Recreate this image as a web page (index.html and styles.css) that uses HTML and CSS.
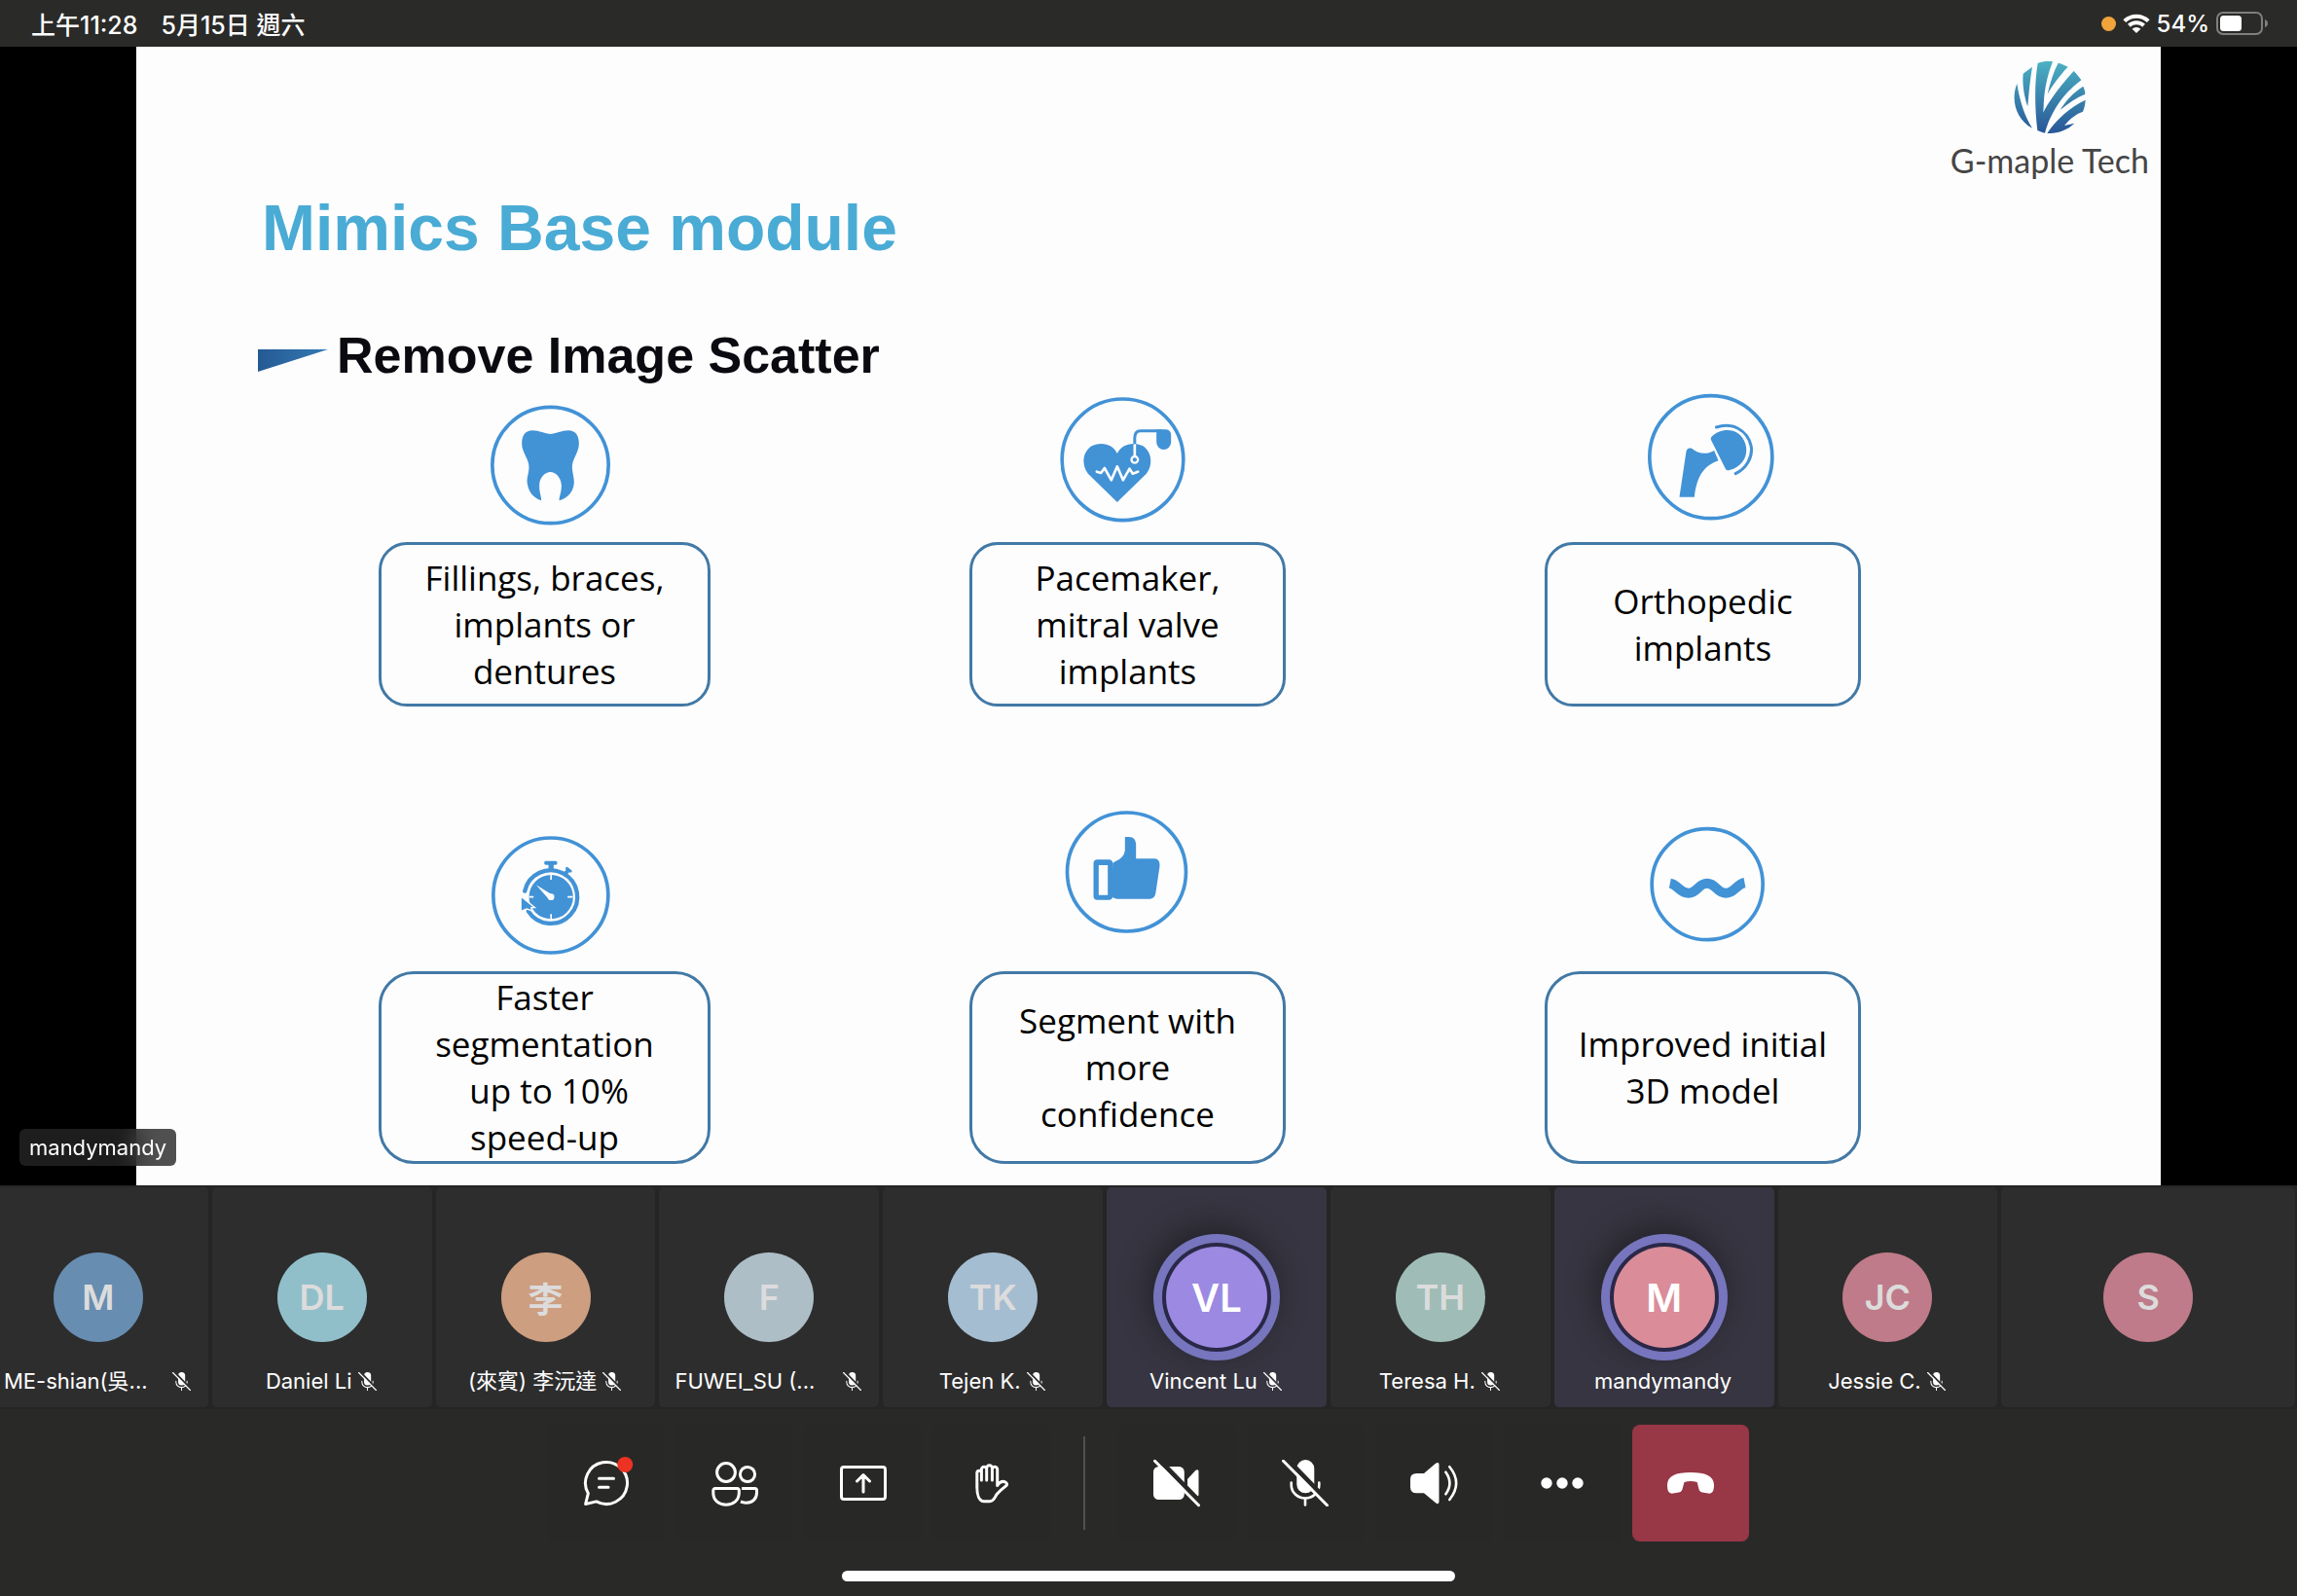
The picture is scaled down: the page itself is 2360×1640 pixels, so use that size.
FILE: index.html
```html
<!DOCTYPE html>
<html lang="zh-Hant">
<head>
<meta charset="utf-8">
<meta name="viewport" content="width=device-width, initial-scale=1">
<title>Meeting</title>
<link rel="stylesheet" href="styles.css">
</head>
<body>
<svg class="sprite" width="0" height="0" aria-hidden="true">
  <defs>
    <mask id="slash-gap" maskUnits="userSpaceOnUse" x="-4" y="-4" width="60" height="60">
      <rect x="-4" y="-4" width="60" height="60" fill="#fff"/>
      <path d="M3 -3L51 46.500" stroke="#000" stroke-width="5"/>
    </mask>
    <symbol id="mic-off" viewBox="0 0 48 48">
      <g mask="url(#slash-gap)">
        <rect x="15.300" y="0" width="18" height="34.300" rx="9" fill="currentColor"/>
        <path d="M9.700 23.500v2.500a14.300 13.500 0 0 0 28.600 0v-2.500M24 40v6.500" fill="none" stroke="currentColor" stroke-width="2.600" stroke-linecap="round"/>
      </g>
      <path d="M1.500 1.300L46.500 46.700" stroke="currentColor" stroke-width="3" stroke-linecap="round"/>
    </symbol>
  </defs>
</svg>

<header class="status">
  <div class="status-group status-time"><span>上午11:28</span><span>5月15日 週六</span></div>
  <div class="status-group">
    <span class="rec-dot"></span>
    <svg class="wifi" viewBox="0 0 28 20" aria-hidden="true">
      <path d="M1.800 7.600A17.500 17.500 0 0 1 26.200 7.600M6.400 12.200A11 11 0 0 1 21.600 12.200" fill="none" stroke="#fff" stroke-width="4"/>
      <path d="M14 20L9.600 15.800A6.300 6.300 0 0 1 18.400 15.800Z" fill="#fff"/>
    </svg>
    <span>54%</span>
    <svg class="battery" viewBox="0 0 53 24" aria-hidden="true">
      <rect x="1" y="1" width="46" height="22" rx="6" fill="none" stroke="#7f7f7e" stroke-width="2"/>
      <rect x="4" y="4" width="22" height="16" rx="3.500" fill="#fff"/>
      <path d="M50 8Q53 9 53 12T50 16Z" fill="#7f7f7e"/>
    </svg>
  </div>
</header>

<main class="stage">
  <article class="slide">
    <div class="brand">
      <svg class="brand-mark" viewBox="506 189 222 222" aria-hidden="true">
        <defs><linearGradient id="leaf" gradientUnits="userSpaceOnUse" x1="0" y1="189" x2="0" y2="411"><stop offset="0" stop-color="#4bb1c3"/><stop offset="1" stop-color="#285697"/></linearGradient></defs>
        <g fill="url(#leaf)">
          <path d="M516 258C524 310 540 360 563 395C515 370 495 310 516 258Z"/>
          <path d="M535 227L563 206C557 240 552 290 549 328C537 295 532 255 535 227Z"/>
          <path d="M580 195C595 189 610 188 626 190C612 225 604 260 600 295C598 320 598 335 597 347C610 320 640 275 691 219C700 228 708 238 714 247C670 280 625 330 602 410C595 409 585 405 579 402C570 330 570 250 580 195Z"/>
          <path d="M643 194C655 197 665 202 673 206C650 230 625 262 610 290C618 255 628 222 643 194Z"/>
          <path d="M720 266C724 275 726 282 726 290C700 300 675 318 649 339C665 312 690 285 720 266Z"/>
          <path d="M727 308C726 325 722 336 719 344C700 350 680 365 662 387L693 380C670 402 640 412 609 411C635 370 680 330 727 308Z"/>
        </g>
      </svg>
      <span class="brand-name">G-maple Tech</span>
    </div>
    <h1 class="title">Mimics Base module</h1>
    <h2 class="subtitle">
      <svg class="wedge" viewBox="0 0 72 24" aria-hidden="true"><defs><linearGradient id="wedge-fill"><stop offset="0" stop-color="#255a93"/><stop offset="1" stop-color="#3479b4"/></linearGradient></defs><path d="M0 0H72L0 23Z" fill="url(#wedge-fill)"/></svg>
      Remove Image Scatter
    </h2>

    <ul class="features">
      <li class="feature">
        <svg class="feature-icon" viewBox="319.500 3 498 498" aria-hidden="true">
          <circle class="ring" cx="585" cy="264" r="179"/>
          <path d="M585 168C600 168 620 157 640 157C662 157 673 172 673 198C673 225 652 245 652 270C652 285 658 300 658 318C656 345 640 365 612 373C612 360 620 345 619 325C617 300 600 285 585 285C570 285 552 300 551 325C550 345 557 360 557 373C532 365 515 345 513 312C513 300 519 285 519 270C519 245 497 225 497 198C497 172 508 157 530 157C550 157 570 168 585 168Z"/>
        </svg>
        <p class="card">Fillings, braces,<br>implants or<br>dentures</p>
      </li>
      <li class="feature">
        <svg class="feature-icon" viewBox="286.500 3 498 498" aria-hidden="true">
          <circle class="ring" cx="519" cy="247" r="187"/>
          <path d="M502 378L412 290C390 262 396 220 425 204C455 190 490 200 502 228C515 200 550 190 580 204C608 220 614 262 592 290Z"/>
          <path d="M556 200V180Q556 158 574 158H640" fill="none" stroke="#4292d6" stroke-width="9"/>
          <path d="M623 154H652Q668 155 668 172V193A22.500 23 0 0 1 623 193Z"/>
          <path d="M439 284L452 288L463 273L484 310L502 268L520 310L540 275L550 290L566 284" fill="none" stroke="#fdfdfd" stroke-width="8" stroke-linejoin="round" stroke-linecap="round"/>
          <path d="M556 199V237" stroke="#fdfdfd" stroke-width="8"/>
          <circle cx="556" cy="247" r="10" stroke="#fdfdfd" stroke-width="7"/>
        </svg>
        <p class="card">Pacemaker,<br>mitral valve<br>implants</p>
      </li>
      <li class="feature">
        <svg class="feature-icon" viewBox="289.500 3 498 498" aria-hidden="true">
          <circle class="ring" cx="562" cy="239" r="189"/>
          <path d="M485 228C486 213 494 209 504 213C520 226 545 235 572 219L585 250C545 265 520 290 511 362H465Z"/>
          <path d="M563 178C590 150 635 148 658 178C685 215 670 265 620 279C613 281 610 279 607 275L562 185Q561 181 563 178Z"/>
          <path d="M579 147C625 130 675 155 686 205C692 240 670 275 638 290" fill="none" stroke="#4292d6" stroke-width="9" stroke-linecap="round"/>
        </svg>
        <p class="card">Orthopedic<br>implants</p>
      </li>
      <li class="feature">
        <svg class="feature-icon" viewBox="319.500 36 498 498" aria-hidden="true">
          <circle class="ring" cx="586" cy="300" r="177"/>
          <path d="M506 287A82 82 0 1 1 517 349" fill="none" stroke="#4292d6" stroke-width="13" stroke-linecap="round"/>
          <rect x="566" y="194" width="40" height="12" rx="5"/><path d="M579 202H595V222H579Z"/>
          <path d="M631 215L637 212L652 224L649 230L643 229L635 238L625 230L633 222Z"/>
          <circle cx="587" cy="305" r="68"/>
          <path d="M587 236V252M587 358V374M519 305H533M638 305H654" stroke="#fdfdfd" stroke-width="5"/>
          <path d="M541 268L592 299L580 312Z" fill="#fdfdfd"/><circle cx="587" cy="305" r="10" fill="#fdfdfd"/>
          <path d="M494 303L537 338L526 338L530 348L512 342L494 349Z" stroke="#fdfdfd" stroke-width="4"/>
        </svg>
        <p class="card card-tall">Faster<br>segmentation<br>&nbsp;up to 10%<br>speed-up</p>
      </li>
      <li class="feature">
        <svg class="feature-icon" viewBox="286.500 36 498 498" aria-hidden="true">
          <circle class="ring" cx="531" cy="228" r="183"/>
          <path fill-rule="evenodd" d="M441 190H476Q488 190 488 202V302Q488 314 476 314H441Q429 314 429 302V202Q429 190 441 190ZM445 207V299H473V207Z"/>
          <path d="M488 200C510 190 525 180 526 160V120H538C553 120 560 130 560 145V187H615C628 187 634 195 633 210L621 290C619 305 612 311 600 311H505C495 311 490 308 486 304Z"/>
        </svg>
        <p class="card card-tall">Segment with<br>more<br>confidence</p>
      </li>
      <li class="feature">
        <svg class="feature-icon" viewBox="289.500 36 498 498" aria-hidden="true">
          <circle class="ring" cx="551" cy="266" r="171"/>
          <path d="M436 263C462 268 465 293 493 293S522 263 550 263S580 293 608 293S640 266 666 261" fill="none" stroke="#4292d6" stroke-width="30"/>
        </svg>
        <p class="card card-tall">Improved initial<br>3D model</p>
      </li>
    </ul>
  </article>
  <span class="presenter">mandymandy</span>
</main>

<ul class="people">
  <li class="person person-first"><span class="avatar blue">M</span><span class="name"><span class="name-text name-fill">ME-shian(吳...</span><svg class="mic"><use href="#mic-off"/></svg></span></li>
  <li class="person"><span class="avatar teal">DL</span><span class="name"><span class="name-text">Daniel Li</span><svg class="mic"><use href="#mic-off"/></svg></span></li>
  <li class="person"><span class="avatar orange">李</span><span class="name"><span class="name-text">(來賓) 李沅達</span><svg class="mic"><use href="#mic-off"/></svg></span></li>
  <li class="person"><span class="avatar grey">F</span><span class="name"><span class="name-text name-fill">FUWEI_SU (...</span><svg class="mic"><use href="#mic-off"/></svg></span></li>
  <li class="person"><span class="avatar sky">TK</span><span class="name"><span class="name-text">Tejen K.</span><svg class="mic"><use href="#mic-off"/></svg></span></li>
  <li class="person speaking"><span class="avatar violet">VL</span><span class="name"><span class="name-text">Vincent Lu</span><svg class="mic"><use href="#mic-off"/></svg></span></li>
  <li class="person"><span class="avatar green">TH</span><span class="name"><span class="name-text">Teresa H.</span><svg class="mic"><use href="#mic-off"/></svg></span></li>
  <li class="person speaking"><span class="avatar pink">M</span><span class="name"><span class="name-text">mandymandy</span></span></li>
  <li class="person"><span class="avatar rose">JC</span><span class="name"><span class="name-text">Jessie C.</span><svg class="mic"><use href="#mic-off"/></svg></span></li>
  <li class="person person-self"><span class="avatar rose">S</span></li>
</ul>

<footer class="controls">
  <div class="buttons">
    <button class="control" type="button" aria-label="Chat"><svg class="glyph" viewBox="0 0 48 48"><path d="M13.800 42.900L2.600 45.500L5.300 34.600A21.500 21.500 0 1 1 13.800 42.900ZM16.500 19.300H31.500M16.500 28.300H26"/><circle cx="43.200" cy="5" r="8" fill="#ec3223" stroke="none"/></svg></button>
    <button class="control" type="button" aria-label="People"><svg class="glyph" viewBox="0 0 48 48"><circle cx="15" cy="13" r="9.400"/><circle cx="37" cy="15" r="7.600"/><path d="M3.800 29.500H26.300A2 2 0 0 1 28.300 31.500V34C28.300 42 22 46.200 15 46.200S1.800 42 1.800 34V31.500A2 2 0 0 1 3.800 29.500Z"/><path stroke-linecap="butt" d="M31 29.500H44.500A2 2 0 0 1 46.500 31.500V34C46.500 40 42 44.200 36 44.200C34 44.200 32 43.800 30 43"/></svg></button>
    <button class="control" type="button" aria-label="Share"><svg class="glyph" viewBox="0 0 48 48"><rect x="1.500" y="7.500" width="45" height="33" rx="2.500"/><path d="M24 33V16M17.500 22L24 15.500L30.500 22"/></svg></button>
    <button class="control" type="button" aria-label="Raise hand"><svg class="glyph" viewBox="0 0 48 48"><path d="M29.700 26.500V10A2.650 2.650 0 0 0 24.400 10V21M24.400 10V8.500A2.850 2.850 0 0 0 18.700 8.500V21M18.700 10A2.650 2.650 0 0 0 13.400 10V21M13.400 13.500A2.300 2.300 0 0 0 8.800 13.500V28C8.800 36 11 42.700 16 42.700H22C26 42.700 27 38.700 29 35.700S34 30.500 39 26.500C40 25.500 39.600 24 38 23C35 21.500 32 23 29.700 26.500"/></svg></button>
    <span class="divider"></span>
    <button class="control" type="button" aria-label="Camera"><svg class="glyph solid" viewBox="0 0 48 48"><g mask="url(#slash-gap)"><rect x="0" y="7" width="31.800" height="34" rx="5.500"/><path d="M35 20L43.500 10.800Q46.500 9 46.500 12V35.500Q46.500 39 43.500 36.500L35 28.500Z"/></g><path d="M1.500 1.300L46.500 46.700" stroke="#fff" stroke-width="3" stroke-linecap="round"/></svg></button>
    <button class="control" type="button" aria-label="Microphone"><svg class="glyph-use"><use href="#mic-off"/></svg></button>
    <button class="control" type="button" aria-label="Speaker"><svg class="glyph" viewBox="0 0 48 48"><path fill="#fff" stroke="none" d="M6.500 14H14L26 3.800Q29.500 1.500 29.500 5V43Q29.500 46.500 26 44.300L14 34.300H6.500Q0 34.300 0 28V20Q0 14 6.500 14Z"/><path stroke-width="2.600" d="M36.400 12.700Q44.500 24 36.400 35.300M40.300 7.200Q54 24 40.300 41"/></svg></button>
    <button class="control" type="button" aria-label="More"><svg class="glyph solid" viewBox="0 0 48 48"><circle cx="8" cy="24" r="5.700"/><circle cx="24" cy="24" r="5.700"/><circle cx="40" cy="24" r="5.700"/></svg></button>
    <button class="control hangup" type="button" aria-label="Leave"><svg class="glyph solid" viewBox="0 0 48 48"><path d="M24 13C39 13 48 16.500 48 26C48 31 47 34 43.500 34.700L36 33.500C33.500 33 32.700 31.500 32.200 29L30.700 23Q24 21.200 17.500 23L15.800 29C15.300 31.500 14.500 33 12 33.500L4.500 34.700C1 34 0 31 0 26C0 16.500 9 13 24 13Z"/></svg></button>
  </div>
  <span class="home-bar"></span>
</footer>
</body>
</html>
```
FILE: styles.css
```css
* { box-sizing: border-box; }

body {
  margin: 0;
  min-height: 100vh;
  display: flex;
  flex-direction: column;
  background: #292928;
  color: #fff;
  font-family: Inter, "Noto Sans CJK TC", sans-serif;
}

ul { list-style: none; margin: 0; padding: 0; }
.sprite { position: absolute; }

/* Status bar */
.status {
  height: 48px;
  padding: 0 30px 0 32px;
  display: flex;
  align-items: center;
  justify-content: space-between;
  background: #2a2a28;
  font-size: 24px;
  font-weight: 500;
}
.status-group { display: flex; align-items: center; gap: 7px; }
.status-time { gap: 24px; font-size: 25px; }
.rec-dot { width: 15px; height: 15px; border-radius: 50%; background: #f1a33c; }
.wifi { width: 28px; height: 20px; }
.battery { width: 53px; height: 24px; }

/* Shared slide */
.stage {
  position: relative;
  flex: 1;
  display: flex;
  padding: 0 140px;
  background: #000;
}
.slide {
  flex: 1;
  padding: 15px 0 22px;
  background: #fdfdfd;
  color: #000;
}
.brand {
  display: flex;
  flex-direction: column;
  align-items: center;
  width: fit-content;
  margin-left: auto;
  padding-right: 12px;
  gap: 8px;
}
.brand-mark { width: 74px; height: 74px; }
.brand-name {
  font-family: Lato, sans-serif;
  font-size: 34px;
  line-height: 40px;
  color: #454545;
}
.title, .subtitle {
  margin: 0;
  font-family: "Liberation Sans", Arial, sans-serif;
  font-weight: 700;
}
.title {
  margin-top: 11px;
  padding-left: 129px;
  font-size: 66px;
  line-height: 76px;
  color: #4aabd5;
}
.subtitle {
  display: flex;
  align-items: baseline;
  gap: 9px;
  margin-top: 67px;
  padding-left: 125px;
  font-size: 52px;
  line-height: 52px;
  color: #0b0a10;
}
.wedge { width: 72px; height: 24px; }

.features {
  display: grid;
  grid-template-columns: 341fr 325fr 325fr;
  column-gap: 266px;
  row-gap: 106px;
  padding: 0 308px 0 249px;
}
.feature { display: flex; flex-direction: column; align-items: center; }
.feature-icon { width: 166px; height: 166px; overflow: visible; fill: #4292d6; }
.ring { fill: none; stroke: #4292d6; stroke-width: 11px; }
.card {
  width: 100%;
  min-height: 169px;
  margin: 0;
  display: grid;
  place-content: center;
  border: 3px solid #4279a6;
  border-radius: 29px;
  font-family: "Open Sans", "Noto Sans", sans-serif;
  font-size: 35px;
  line-height: 48px;
  text-align: center;
}
.card-tall { min-height: 198px; border-radius: 36px; }

.presenter {
  position: absolute;
  left: 20px;
  bottom: 20px;
  padding: 0 10px;
  border-radius: 6px;
  background: rgba(36, 36, 36, 0.8);
  backdrop-filter: blur(12px);
  font-size: 22px;
  line-height: 38px;
}

/* Participants */
.people {
  display: flex;
  gap: 4px;
  height: 230px;
  padding: 2px 2px 2px 0;
  background: #252525;
  overflow: hidden;
}
.person {
  position: relative;
  flex: 226 1 0;
  min-width: 0;
  display: grid;
  place-items: center;
  border-radius: 5px;
  background: #2d2d2d;
}
.person-first { margin-left: -12px; }
.person-self { flex-grow: 302; }
.avatar {
  width: 92px;
  height: 92px;
  border-radius: 50%;
  display: grid;
  place-items: center;
  color: #dcdcdc;
  font-size: 36px;
  font-weight: 600;
}
.name {
  position: absolute;
  left: 16px;
  right: 18px;
  bottom: 12px;
  display: flex;
  align-items: center;
  justify-content: center;
  gap: 6px;
  font-size: 22px;
  line-height: 30px;
}
.name-text { white-space: nowrap; }
.name-fill { flex: 1; }
.mic { width: 19px; height: 19px; }

.speaking { background: #363541; }
.speaking .avatar {
  width: 104px;
  height: 104px;
  color: #fff;
  font-size: 40px;
  box-shadow: 0 0 0 4px #2a2847, 0 0 0 13px #7675bd, -4px -8px 28px 14px rgba(20, 20, 22, 0.5);
}

.blue { background: #678db1; }
.teal { background: #90bfca; }
.orange { background: #cd9e80; }
.grey { background: #adbec6; }
.sky { background: #a5bdd1; }
.violet { background: #9b89e2; }
.green { background: #9fbdb6; }
.pink { background: #da8c99; }
.rose { background: #bf7b89; }

/* Call controls */
.controls {
  display: flex;
  flex-direction: column;
  align-items: center;
  justify-content: space-between;
  height: 192px;
  padding: 16px 0 15px;
}
.buttons { display: flex; align-items: center; gap: 12px; }
.control {
  width: 120px;
  height: 120px;
  padding: 0;
  display: grid;
  place-items: center;
  border: 0;
  border-radius: 8px;
  background: #282827;
  color: #fff;
}
.hangup { background: #983746; }
.glyph, .glyph-use { width: 48px; height: 48px; overflow: visible; }
.glyph { fill: none; stroke: #fff; stroke-width: 3px; stroke-linecap: round; stroke-linejoin: round; }
.glyph.solid { fill: #fff; stroke: none; }
.divider { width: 2px; height: 96px; margin: 0 22px; background: #515150; }
.home-bar { width: 630px; height: 11px; border-radius: 6px; background: #fff; }
```
